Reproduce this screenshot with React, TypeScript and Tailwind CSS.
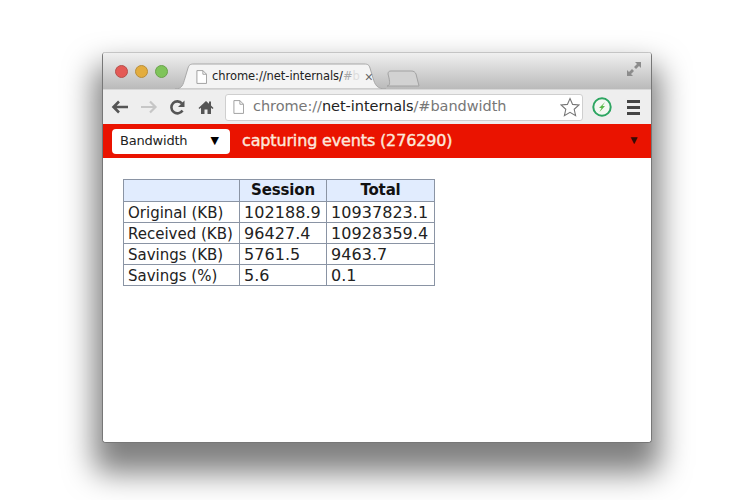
import React from "react";

const rows = [
  ["Original (KB)", "102188.9", "10937823.1"],
  ["Received (KB)", "96427.4", "10928359.4"],
  ["Savings (KB)", "5761.5", "9463.7"],
  ["Savings (%)", "5.6", "0.1"],
];

function Dot({ c, b }: { c: string; b: string }) {
  return <div className="w-[13px] h-[13px] rounded-full border" style={{ background: c, borderColor: b }} />;
}

function PageIcon({ className }: { className: string }) {
  return (
    <svg className={className} viewBox="0 0 12 15" fill="#fff" stroke="#9a9a9a" strokeWidth="1">
      <path d="M1 .5h6.5l4 4v10H1z" />
      <path d="M7.5.5v4h4" fill="none" />
    </svg>
  );
}

export default function App() {
  return (
    <div className="w-[750px] h-[500px] bg-white overflow-hidden pt-[52px] pl-[102px] font-['Liberation_Sans',sans-serif]">
      <div className="w-[550px] h-[391px] flex flex-col rounded-[4px] overflow-hidden bg-white border-x border-b border-[#777] shadow-[0_22px_30px_8px_rgba(0,0,0,0.5)]">
        <div className="h-[37px] shrink-0 flex items-end bg-gradient-to-b from-[#f0f0f0] to-[#bababa] border-t border-[#c4c4c4]">
          <div className="flex items-center gap-[7px] pl-[12px] pb-[11px] w-[76px] shrink-0">
            <Dot c="#e45a56" b="#b5504c" />
            <Dot c="#e3ad3f" b="#b98e3a" />
            <Dot c="#7fc45a" b="#6aa24c" />
          </div>
          <div className="relative w-[211px] h-[26px] -ml-[4px] shrink-0">
            <svg className="absolute inset-0" width="211" height="26" viewBox="0 0 211 26">
              <path d="M0 26C7 26 8 22 10 15L13 5C14 2 15 1 19 1H189C193 1 194 2 195 5L198 15C200 22 202 26 211 26Z" fill="#f4f4f4" stroke="#a8a8a8" />
            </svg>
            <div className="relative flex items-center h-full pl-[21px] pt-[2px]">
              <PageIcon className="w-[11px] h-[14px] shrink-0" />
              <span className="ml-[5px] shrink-0 text-[11.5px] text-[#222] whitespace-nowrap font-['DejaVu_Sans',sans-serif] tracking-[-0.05px]">
                chrome://net-internals/<span className="text-[#aaa]">#</span><span className="text-[#ddd]">b</span>
              </span>
              <span className="ml-[5px] text-[#666] text-[14px] leading-none">×</span>
            </div>
          </div>
          <svg className="shrink-0 mb-[2px]" width="34" height="17" viewBox="0 0 34 17">
            <path d="M1 16C4 16 4 13 3 8L2 4C2 2 3 1 5 1H25C28 1 29 2 30 4L33 16Z" fill="#d2d2d2" stroke="#a2a2a2" />
          </svg>
          <svg className="ml-auto mr-[9px] mb-[12px] shrink-0" width="16" height="16" viewBox="0 0 16 16" fill="#8c8c8c">
            <path d="M9 1h6v6l-2-2-3 3-2-2 3-3zM1 9l2 2 3-3 2 2-3 3 2 2H1z" />
          </svg>
        </div>
        <div className="h-[35px] shrink-0 flex items-center bg-[#eeeeee] border-t border-[#d8d8d8]">
          <div className="w-[123px] shrink-0 flex items-center pl-[8px]">
            <svg width="18" height="14" viewBox="0 0 18 14" fill="none" stroke="#555" strokeWidth="2.6">
              <path d="M17 7H3M8 1.5 2.5 7 8 12.5" />
            </svg>
            <svg className="ml-[11px]" width="18" height="14" viewBox="0 0 18 14" fill="none" stroke="#c6c6c6" strokeWidth="2.2">
              <path d="M1 7h14M10 1.5 15.5 7 10 12.5" />
            </svg>
            <svg className="ml-[11px]" width="17" height="17" viewBox="0 0 17 17" fill="none" stroke="#555" strokeWidth="2.6">
              <path d="M13.5 11.5A6 6 0 1 1 13 4.5" />
              <path d="M15.5 1.5V8H9Z" fill="#555" stroke="none" />
            </svg>
            <svg className="ml-[12px]" width="16" height="16" viewBox="0 0 16 16" fill="#555">
              <path d="M8 2 0.5 9 1.5 10 3 8.7V15H6.5V10.5H9.5V15H13V8.7L14.5 10 15.5 9 13 6.6V2.5H11V4.8Z" />
            </svg>
          </div>
          <div className="w-[358px] h-[27px] shrink-0 flex items-center bg-white border border-[#cfcfcf] rounded-[3px] pl-[7px] pr-[2px] -ml-[1px]">
            <PageIcon className="w-[11px] h-[14px] shrink-0" />
            <span className="ml-[9px] text-[14.5px] text-[#777] whitespace-nowrap font-['DejaVu_Sans',sans-serif] tracking-[-0.05px]">
              chrome://<span className="text-[#222]">net-internals</span>/#bandwidth
            </span>
            <svg className="ml-auto shrink-0" width="20" height="20" viewBox="0 0 20 20" fill="#fff" stroke="#777" strokeWidth="1.1">
              <path d="M10 1.5 12.6 7.4 19 8 14.2 12.3 15.6 18.6 10 15.3 4.4 18.6 5.8 12.3 1 8 7.4 7.4Z" />
            </svg>
          </div>
          <svg className="ml-[9px] shrink-0" width="20" height="20" viewBox="0 0 20 20">
            <circle cx="10" cy="10" r="8.7" fill="#f4f8f2" stroke="#2ea662" strokeWidth="2" />
            <path d="M13 5 7 11h2.5L7.5 15 13 9h-2.5Z" fill="#58b947" />
          </svg>
          <div className="ml-[15px] w-[13px] flex flex-col gap-[3px] shrink-0">
            <div className="h-[3px] bg-[#444]" />
            <div className="h-[3px] bg-[#444]" />
            <div className="h-[3px] bg-[#444]" />
          </div>
        </div>
        <div className="h-[34px] shrink-0 flex items-center bg-[#ea1300] pl-[9px] pr-[11px]">
          <div className="w-[118px] h-[25px] bg-white rounded-[4px] flex items-center justify-between pl-[8px] pr-[11px] shrink-0 font-['DejaVu_Sans',sans-serif] text-[13px] text-[#222]">
            <span className="tracking-[-0.2px]">Bandwidth</span>
            <span className="text-[11px] text-black">▼</span>
          </div>
          <span className="ml-[12px] text-[16px] text-[#fde8dc] whitespace-nowrap font-['DejaVu_Sans',sans-serif] tracking-[-0.15px] [-webkit-text-stroke:0.4px_#fde8dc]">capturing events (276290)</span>
          <span className="ml-auto text-[12px] text-[#3a0a05] -mt-[3px]">▼</span>
        </div>
        <div className="flex-1 pt-[21px] pl-[20px] bg-white">
          <table className="border-collapse font-['DejaVu_Sans',sans-serif] text-[15px] leading-none text-[#222]">
            <thead>
              <tr className="h-[22px] bg-[#e1ecfe] text-[#111] tracking-[-0.15px]">
                <th className="w-[116px] border border-[#8a94a4]" />
                <th className="w-[87px] border border-[#8a94a4] font-bold">Session</th>
                <th className="w-[108px] border border-[#8a94a4] font-bold">Total</th>
              </tr>
            </thead>
            <tbody>
              {rows.map((r) => (
                <tr key={r[0]} className="h-[21px]">
                  <td className="border border-[#8a94a4] pl-[4px] pt-[2px] whitespace-nowrap">{r[0]}</td>
                  <td className="border border-[#8a94a4] pl-[4px] pt-[2px] whitespace-nowrap text-[16px] tracking-[0.05px]">{r[1]}</td>
                  <td className="border border-[#8a94a4] pl-[4px] pt-[2px] whitespace-nowrap text-[16px] tracking-[0.05px]">{r[2]}</td>
                </tr>
              ))}
            </tbody>
          </table>
        </div>
      </div>
    </div>
  );
}
